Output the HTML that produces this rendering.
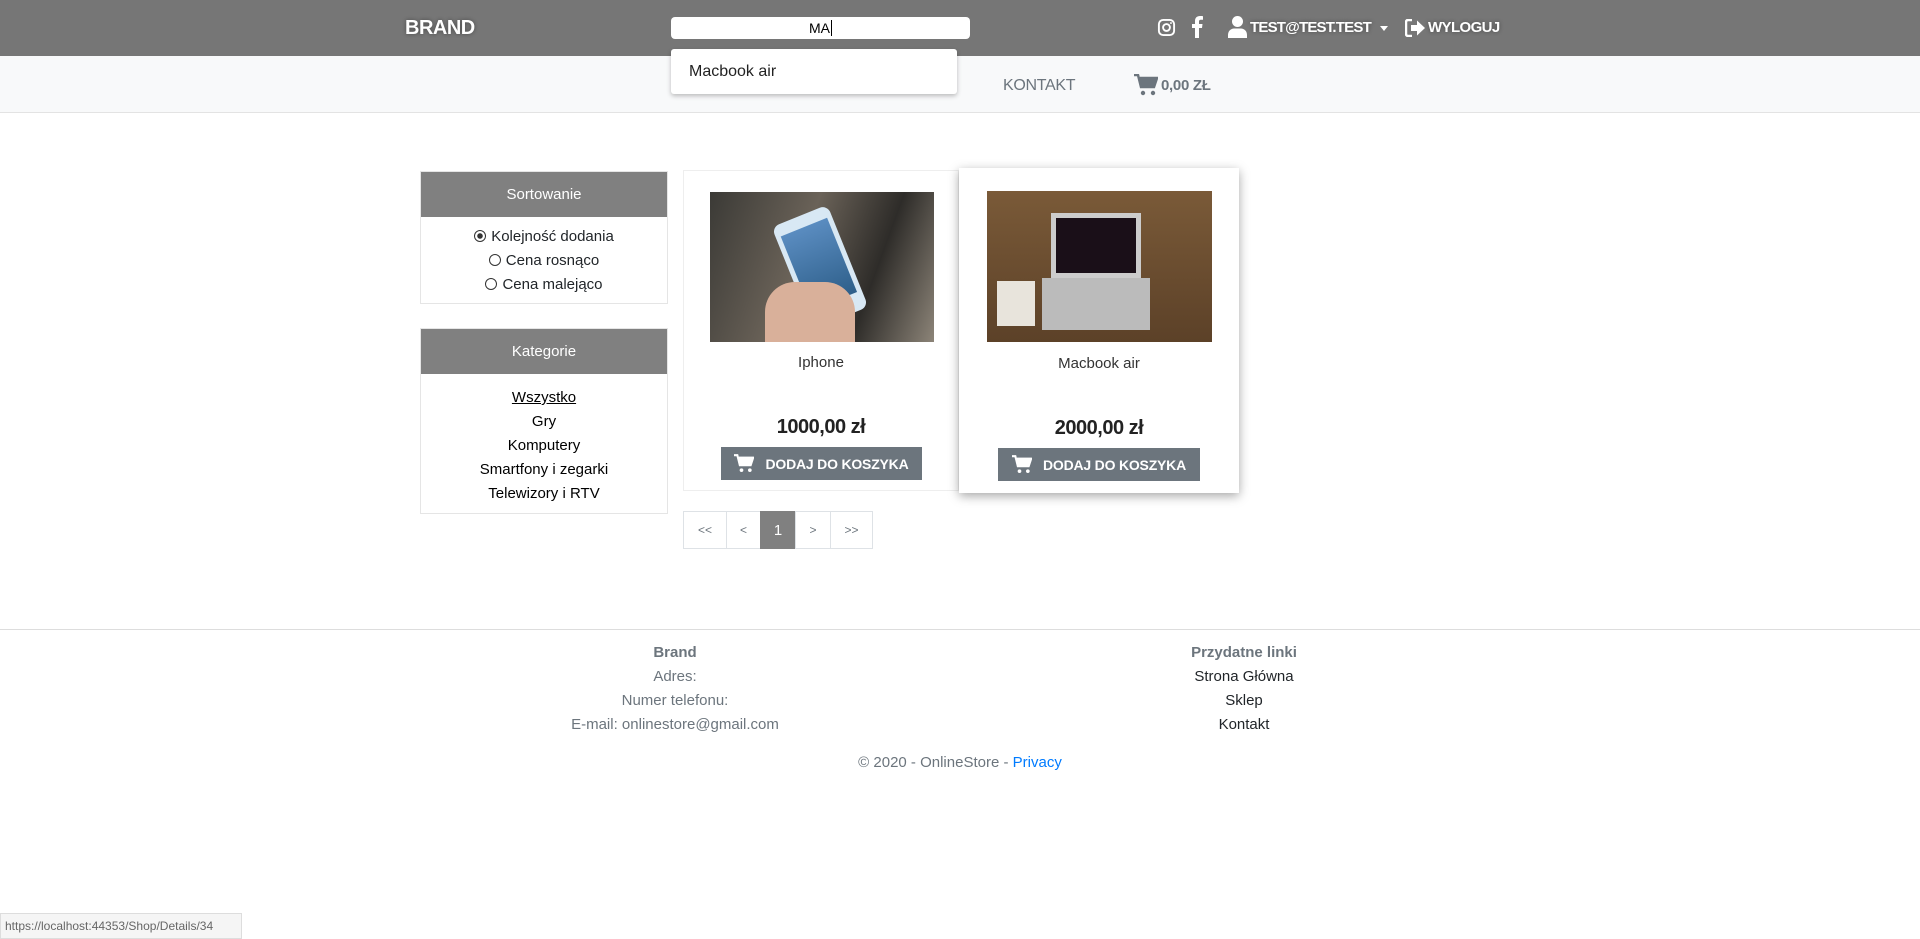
<!DOCTYPE html>
<html><head><meta charset="utf-8"><style>
*{box-sizing:border-box;margin:0;padding:0}
body{width:1920px;height:939px;position:relative;background:#fff;font-family:"Liberation Sans",sans-serif;color:#212529;font-size:15px;overflow:hidden}
.a{position:absolute}
.nav{left:0;top:0;width:1920px;height:56px;background:#767676}
.w{color:#fff;font-weight:bold;text-shadow:0 0 4px rgba(0,0,0,.4)}
.bar{left:0;top:56px;width:1920px;height:57px;background:#f8f9fa;border-bottom:1px solid #e3e3e3}
.panel{border:1px solid #e5e5e5;background:#fff}
.ph{background:#808080;color:#fff;text-align:center;font-size:15px}
.c{text-align:center}
.card{background:#fff}
.btn{background:#6c757d;color:#fff;font-size:14px;font-weight:bold;display:flex;align-items:center;justify-content:center;gap:11px;letter-spacing:-.2px}
.pg{border:1px solid #dee2e6;color:#6c757d;font-size:12px;display:flex;align-items:center;justify-content:center;height:38px;top:511px}
.ft{color:#6c757d;text-align:center;font-size:15px}
</style></head><body>
<div class="a nav"></div>
<div class="a w" style="left:405px;top:17px;font-size:20px;letter-spacing:-.5px">BRAND</div>
<div class="a" style="left:671px;top:17px;width:299px;height:22px;background:#fff;border-radius:4px;text-align:center;font-size:14px;line-height:22px;color:#000">MA<span style="border-left:1px solid #000;margin-left:1px"></span></div>
<div class="a bar"></div>
<div class="a" style="left:671px;top:49px;width:286px;height:45px;background:#fff;border-radius:3px;box-shadow:0 2px 5px rgba(0,0,0,.25);font-size:16px;padding:14px 18px;color:#222">Macbook air</div>
<svg class="a" style="left:1157px;top:18px" width="19" height="19" viewBox="0 0 20 20"><rect x="2" y="2" width="16" height="16" rx="4.5" fill="none" stroke="#fff" stroke-width="2"/><circle cx="10" cy="10" r="3.6" fill="none" stroke="#fff" stroke-width="2"/><circle cx="14.7" cy="5.3" r="1" fill="#fff"/></svg>
<svg class="a" style="left:1191px;top:16px" width="12" height="22" viewBox="0 0 12 22"><path d="M8 22V12h3l.5-4H8V5.5c0-1 .4-1.8 1.9-1.8H12V.2C11.5.1 10.3 0 9 0 6 0 4 1.8 4 5.1V8H1v4h3v10z" fill="#fff"/></svg>
<svg class="a" style="left:1228px;top:16px" width="19" height="22" viewBox="0 0 19 22"><circle cx="9.5" cy="5.5" r="5.5" fill="#fff"/><path d="M0 22v-3c0-4 3-6.5 6-6.5h7c3 0 6 2.5 6 6.5v3z" fill="#fff"/></svg>
<div class="a w" style="left:1250px;top:19px;font-size:15px;letter-spacing:-.8px">TEST@TEST.TEST</div>
<div class="a" style="left:1380px;top:26px;border:4px solid transparent;border-top:5px solid #fff;border-bottom:0"></div>
<svg class="a" style="left:1405px;top:19px" width="21" height="18" viewBox="0 0 21 18"><path d="M7 1H3a2 2 0 0 0-2 2v12a2 2 0 0 0 2 2h4" fill="none" stroke="#fff" stroke-width="2.5"/><path d="M6 6h6V1.5L20 9l-8 7.5V12H6z" fill="#fff"/></svg>
<div class="a w" style="left:1428px;top:19px;font-size:15px;letter-spacing:-.6px">WYLOGUJ</div>
<div class="a" style="left:1003px;top:77px;color:#6c757d;font-size:16px;letter-spacing:-.3px">KONTAKT</div>
<svg class="a" style="left:1134px;top:74px" width="24" height="22" viewBox="0 0 24 22"><path d="M0 1h4l3 12h13l3-9H6" fill="none" stroke="#6c757d" stroke-width="2.5"/><path d="M5 3h18l-3 10H8z" fill="#6c757d"/><circle cx="9" cy="19" r="2.2" fill="#6c757d"/><circle cx="19" cy="19" r="2.2" fill="#6c757d"/></svg>
<div class="a" style="left:1161px;top:77px;color:#6c757d;font-size:15px;font-weight:bold;letter-spacing:-.3px">0,00 ZŁ</div>

<div class="a panel" style="left:420px;top:171px;width:248px;height:133px">
<div class="ph" style="height:45px;line-height:46px">Sortowanie</div>
<div class="c" style="padding-top:8px;line-height:24px;font-size:15px">
<div><span style="display:inline-block;width:12px;height:12px;border:1px solid #333;border-radius:50%;vertical-align:-1px;margin-right:5px;background:radial-gradient(#333 2.5px,transparent 3px)"></span>Kolejność dodania</div>
<div><span style="display:inline-block;width:12px;height:12px;border:1px solid #333;border-radius:50%;vertical-align:-1px;margin-right:5px"></span>Cena rosnąco</div>
<div><span style="display:inline-block;width:12px;height:12px;border:1px solid #333;border-radius:50%;vertical-align:-1px;margin-right:5px"></span>Cena malejąco</div></div></div>

<div class="a panel" style="left:420px;top:328px;width:248px;height:186px">
<div class="ph" style="height:45px;line-height:46px">Kategorie</div>
<div class="c" style="padding-top:12px;line-height:24px;font-size:15px;color:#000">
<div style="text-decoration:underline">Wszystko</div><div>Gry</div><div>Komputery</div><div>Smartfony i zegarki</div><div>Telewizory i RTV</div></div></div>

<div class="a card" style="left:683px;top:170px;width:276px;height:321px;border:1px solid #eee"></div>
<div class="a" style="left:710px;top:192px;width:224px;height:150px;background:linear-gradient(110deg,#3b3a36,#6a6258 40%,#2e2c29 70%,#8c8478)"><div class="a" style="left:80px;top:20px;width:60px;height:110px;background:#d8e8f4;border-radius:8px;transform:rotate(-22deg)"><div style="margin:12px 5px;height:80px;background:linear-gradient(#5a8cc0,#2e5f8a)"></div></div><div class="a" style="left:55px;top:90px;width:90px;height:60px;background:#d9b09a;border-radius:30px 30px 0 0"></div></div>
<div class="a c" style="left:683px;top:354px;width:276px;font-size:15px;color:#333">Iphone</div>
<div class="a c" style="left:683px;top:416px;width:276px;font-size:20px;font-weight:bold;color:#222;letter-spacing:-.5px">1000,00 zł</div>
<div class="a btn" style="left:721px;top:447px;width:201px;height:33px"><svg width="20" height="19" viewBox="0 0 24 22"><path d="M0 1h4l3 12h13l3-9H6" fill="none" stroke="#fff" stroke-width="2.5"/><path d="M5 3h18l-3 10H8z" fill="#fff"/><circle cx="9" cy="19" r="2.2" fill="#fff"/><circle cx="19" cy="19" r="2.2" fill="#fff"/></svg>DODAJ DO KOSZYKA</div>

<div class="a card" style="left:959px;top:168px;width:280px;height:325px;box-shadow:0 3px 10px rgba(0,0,0,.35)"></div>
<div class="a" style="left:987px;top:191px;width:225px;height:151px;background:linear-gradient(#7a5a38,#5c4128)"><div class="a" style="left:64px;top:22px;width:90px;height:65px;background:#1a0f18;border:5px solid #ccc"></div><div class="a" style="left:55px;top:87px;width:108px;height:52px;background:#bbb"></div><div class="a" style="left:10px;top:90px;width:38px;height:45px;background:#e8e4dc"></div></div>
<div class="a c" style="left:959px;top:355px;width:280px;font-size:15px;color:#333">Macbook air</div>
<div class="a c" style="left:959px;top:417px;width:280px;font-size:20px;font-weight:bold;color:#222;letter-spacing:-.5px">2000,00 zł</div>
<div class="a btn" style="left:998px;top:448px;width:202px;height:33px"><svg width="20" height="19" viewBox="0 0 24 22"><path d="M0 1h4l3 12h13l3-9H6" fill="none" stroke="#fff" stroke-width="2.5"/><path d="M5 3h18l-3 10H8z" fill="#fff"/><circle cx="9" cy="19" r="2.2" fill="#fff"/><circle cx="19" cy="19" r="2.2" fill="#fff"/></svg>DODAJ DO KOSZYKA</div>

<div class="a pg" style="left:683px;width:44px">&lt;&lt;</div>
<div class="a pg" style="left:726px;width:35px">&lt;</div>
<div class="a pg" style="left:760px;width:36px;background:#808080;border-color:#808080;color:#fff;font-size:15px">1</div>
<div class="a pg" style="left:795px;width:36px">&gt;</div>
<div class="a pg" style="left:830px;width:43px">&gt;&gt;</div>

<div class="a" style="left:0;top:629px;width:1920px;border-top:1px solid #ddd"></div>
<div class="a ft" style="left:475px;top:641px;width:400px;line-height:24px"><b>Brand</b><br>Adres:<br>Numer telefonu:<br>E-mail: onlinestore@gmail.com</div>
<div class="a ft" style="left:1044px;top:641px;width:400px;line-height:24px"><b>Przydatne linki</b><br><span style="color:#212529">Strona Główna<br>Sklep<br>Kontakt</span></div>
<div class="a ft" style="left:660px;top:754px;width:600px">© 2020 - OnlineStore - <span style="color:#007bff">Privacy</span></div>
<div class="a" style="left:0;top:913px;width:242px;height:26px;background:#f5f5f5;border:1px solid #ddd;font-size:12px;color:#666;line-height:24px;padding-left:4px">https://localhost:44353/Shop/Details/34</div>
</body></html>
